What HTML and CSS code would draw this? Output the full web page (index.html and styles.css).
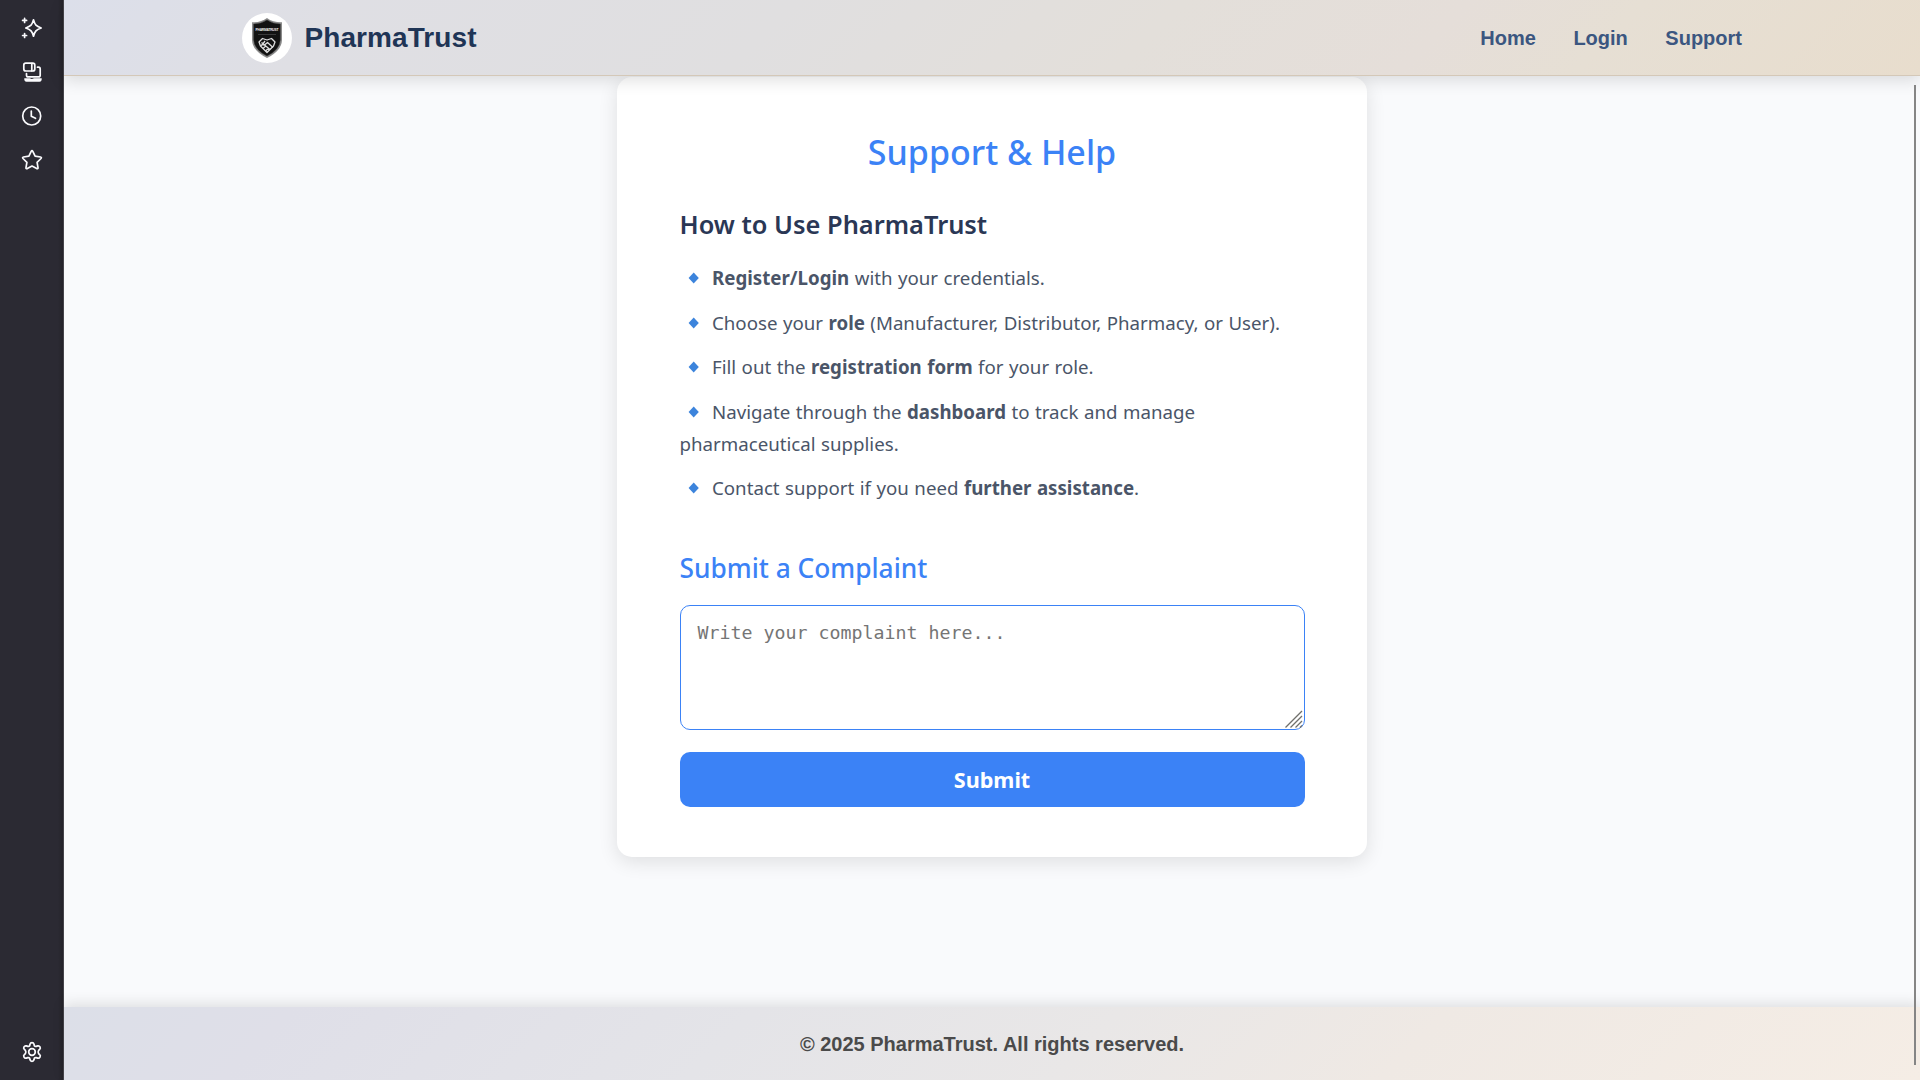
FILE: index.html
```
<!DOCTYPE html>
<html lang="en">
<head>
<meta charset="utf-8">
<title>PharmaTrust</title>
<link rel="stylesheet" href="styles.css">
</head>
<body>
<aside class="sidebar">
  <svg class="icon" viewBox="0 0 24 24"><path d="M13.500 3.800c1.300 5.100 2.700 6.500 7.700 8.200-5 1.700-6.400 3.100-7.700 8.200-1.300-5.100-2.700-6.500-7.700-8.200 5-1.700 6.400-3.100 7.700-8.200z"/><path d="M4.600 2.400v4M2.600 4.400h4M4.600 17.500v4M2.600 19.500h4"/></svg>
  <svg class="icon" viewBox="0 0 24 24"><rect x="3.800" y="3.200" width="11" height="7.800" rx="2"/><path d="M11.800 3.500v7.300M17.500 7.200h1q1.700 0 1.700 1.700v6.300q0 1.700-1.700 1.700H8.200q-1.700 0-1.700-1.700v-1.700"/><path class="solid" d="M4.300 18.300h5.700q1.500 1.500 4 0h7.700q.3 3.400-2.200 3.400H6.500q-2.500 0-2.200-3.400z"/></svg>
  <svg class="icon" viewBox="0 0 24 24"><circle cx="11.700" cy="12" r="9"/><path d="M11.300 7v5.300l4.200 2"/></svg>
  <svg class="icon" viewBox="0 0 24 24"><path d="M11.200 3.400q.8-1.500 1.600 0l2.300 4.800 5.400.8q1.500.3.500 1.500l-3.900 3.800.9 5.400q.1 1.500-1.300.9L12 18.100l-4.700 2.500q-1.400.6-1.300-.9l.9-5.400L3 10.500q-1-1.200.500-1.500l5.400-.8z"/></svg>
  <svg class="icon settings" viewBox="0 0 24 24"><circle cx="12" cy="12" r="3.300"/><path d="M10 4.200Q10.400 2.700 12 2.700T14 4.200L14.300 5.700Q15 6.700 16.200 6.400L17.700 5.900Q19.200 5.500 20 6.900T19.700 9.300L18.600 10.400Q17.700 12 18.600 13.600L19.700 14.700Q20.800 15.700 20 17.100T17.700 18.100L16.200 17.600Q15 17.300 14.300 18.300L14 19.800Q13.600 21.300 12 21.300T10 19.800L9.700 18.300Q9 17.300 7.800 17.600L6.300 18.100Q4.800 18.500 4 17.100T4.300 14.700L5.400 13.600Q6.300 12 5.400 10.400L4.300 9.300Q3.200 8.300 4 6.900T6.300 5.900L7.800 6.400Q9 6.700 9.700 5.700Z"/></svg>
</aside>
<div class="page">
  <header class="header">
    <div class="header-inner">
      <a class="brand">
        <svg class="logo" viewBox="0 0 50 50">
          <circle cx="25" cy="25" r="25" fill="#fff"/>
          <path d="M25 5Q31 9.500 40 9.300V27Q39.500 38 25 45Q10.500 38 10 27V9.300Q19 9.500 25 5z" fill="#8b8b8b"/>
          <path d="M25 7Q31 11 38.300 11V27Q37.500 37 25 43Q12.500 37 11.700 27V11Q19 11 25 7z" fill="#121212" stroke="#333" stroke-width=".5"/>
          <text class="logo-text" x="25" y="18.400" text-anchor="middle" textLength="23">PHARMATRUST</text>
          <path d="M16 21.500h18" stroke="#555" stroke-width=".6"/>
          <g fill="none" stroke="#ddd" stroke-width="1.300" stroke-linejoin="round"><path d="M17 29l3.500-3.500L25 27l4.500-1.500L33 29l-1.500 4-6.500 6.500-6.500-6.500z"/><path d="M19.500 29.500l8.500 7M23 28l-2.500 3.500 2 .5 3-2.500 5.500 5M18.500 33l3-2.500M21 35.500l3-2.700M23.500 38l3-2.800"/></g>
        </svg>
        <span class="brand-name">PharmaTrust</span>
      </a>
      <nav class="nav"><a>Home</a><a>Login</a><a>Support</a></nav>
    </div>
  </header>
  <main class="main">
    <section class="card">
      <h1 class="title">Support &amp; Help</h1>
      <h2 class="subtitle">How to Use PharmaTrust</h2>
      <ul class="steps">
        <li><svg class="bullet" viewBox="0 0 32.500 12"><path d="M13.700 .4l5.100 5.600-5.100 5.600L8.600 6z"/></svg><strong>Register/Login</strong> with your credentials.</li>
        <li><svg class="bullet" viewBox="0 0 32.500 12"><path d="M13.700 .4l5.100 5.600-5.100 5.600L8.600 6z"/></svg>Choose your <strong>role</strong> (Manufacturer, Distributor, Pharmacy, or User).</li>
        <li><svg class="bullet" viewBox="0 0 32.500 12"><path d="M13.700 .4l5.100 5.600-5.100 5.600L8.600 6z"/></svg>Fill out the <strong>registration form</strong> for your role.</li>
        <li><svg class="bullet" viewBox="0 0 32.500 12"><path d="M13.700 .4l5.100 5.600-5.100 5.600L8.600 6z"/></svg>Navigate through the <strong>dashboard</strong> to track and manage<br>pharmaceutical supplies.</li>
        <li><svg class="bullet" viewBox="0 0 32.500 12"><path d="M13.700 .4l5.100 5.600-5.100 5.600L8.600 6z"/></svg>Contact support if you need <strong>further assistance</strong>.</li>
      </ul>
      <h2 class="subtitle complaint">Submit a Complaint</h2>
      <div class="field">
        <textarea class="textarea" placeholder="Write your complaint here..."></textarea>
        <svg class="grip" viewBox="0 0 18 18"><path d="M.5 17.500l16.500-16.500M5.500 17.500L17 6M10.500 17.500L17 11M15 17.500l2-2"/></svg>
      </div>
      <button class="submit">Submit</button>
    </section>
  </main>
  <footer class="footer">© 2025 PharmaTrust. All rights reserved.</footer>
  <div class="scrollbar"></div>
</div>
</body>
</html>
```
FILE: styles.css
```
* { box-sizing: border-box; }
body {
  margin: 0;
  height: 100vh;
  display: flex;
  overflow: hidden;
  background: #f9fafc;
  font-family: "Noto Sans", "Open Sans", sans-serif;
}
.sidebar {
  width: 64px;
  display: flex;
  flex-direction: column;
  align-items: center;
  gap: 20px;
  padding: 16px 0;
  background: linear-gradient(90deg, #2b2a33 58px, #242329 63px, #45444a 63px);
}
.icon {
  width: 24px;
  height: 24px;
  flex: none;
  fill: none;
  stroke: #fbfbfe;
  stroke-width: 1.7;
  stroke-linecap: round;
  stroke-linejoin: round;
}
.icon .solid { fill: #fbfbfe; stroke: none; }
.settings { margin-top: auto; }
.page {
  flex: 1;
  display: flex;
  flex-direction: column;
  position: relative;
}
.header {
  height: 76px;
  flex: none;
  position: relative;
  z-index: 1;
  border-bottom: 1px solid #d4c8b8;
  background: linear-gradient(135deg, #dcdfea 0%, #dfdfe4 15%, #e0dfe0 38%, #e3dfda 58%, #e5ded9 73%, #e6dfd4 82%, #e8ddcd 100%);
  box-shadow: 0 5px 15px rgba(0, 0, 0, .12);
}
.header-inner {
  width: 1500px;
  height: 75px;
  margin: 0 auto;
  display: flex;
  align-items: center;
  justify-content: space-between;
  font-family: "Liberation Sans", Arial, sans-serif;
  font-weight: 700;
}
.brand { display: flex; align-items: center; gap: 12.5px; }
.logo { width: 50px; height: 50px; }
.logo-text { font: 700 3.3px "Liberation Sans", sans-serif; fill: #eee; }
.brand-name { font-size: 28px; letter-spacing: .08px; color: #1f3556; }
.nav { display: flex; gap: 37.5px; padding-top: 1px; font-size: 20px; color: #3b5680; }
.main { flex: 1; padding-top: 1px; }
.card {
  width: 750px;
  height: 780px;
  margin: 0 auto;
  padding: 53px 62.5px 50px;
  border-radius: 15px;
  background: #fff;
  box-shadow: 0 5px 19px rgba(0, 0, 0, .11);
}
.title {
  margin: 0 0 32px;
  font-size: 34px;
  line-height: 44px;
  font-weight: 500;
  text-align: center;
  color: #3b82f6;
}
.subtitle {
  margin: 0 0 20px;
  font-size: 25.4px;
  line-height: 36px;
  font-weight: 600;
  color: #2a3755;
}
.steps {
  margin: 0 0 46px;
  padding: 0;
  list-style: none;
  display: flex;
  flex-direction: column;
  gap: 12.5px;
  font-size: 18.7px;
  line-height: 32px;
  word-spacing: .6px;
  color: #4a5568;
  white-space: nowrap;
}
.bullet { width: 32.5px; height: 12px; fill: #3c84dc; vertical-align: 1px; }
.complaint { font-size: 26.3px; font-weight: 500; color: #3b82f6; margin-bottom: 19px; }
.field { position: relative; height: 125px; margin-bottom: 22px; }
.textarea {
  display: block;
  width: 100%;
  height: 125px;
  padding: 16px 17px;
  border: 1px solid #3b82f6;
  border-radius: 10px;
  resize: none;
  outline: 0;
  background: #fff;
  font: 18.27px "DejaVu Sans Mono", monospace;
}
.textarea::placeholder { color: #757575; }
.grip {
  position: absolute;
  right: 2px;
  bottom: 2px;
  width: 18px;
  height: 18px;
  fill: none;
  stroke: #70706c;
  stroke-width: 1.3;
}
.submit {
  display: block;
  width: 100%;
  height: 55px;
  padding: 0;
  border: 0;
  border-radius: 10px;
  background: #3b82f6;
  color: #fff;
  font: 700 21.6px "Noto Sans", sans-serif;
}
.footer {
  height: 73px;
  flex: none;
  display: flex;
  align-items: center;
  justify-content: center;
  padding-top: 2px;
  background: linear-gradient(135deg, #dcdfe8 0%, #dfdfe8 12%, #e4e4e8 36%, #e9e7e7 55%, #efe9e4 72%, #f5ede5 100%);
  box-shadow: 0 -4px 12px rgba(0, 0, 0, .1);
  font: 700 20px "Liberation Sans", Arial, sans-serif;
  color: #4a4a4a;
}
.scrollbar {
  position: absolute;
  z-index: 2;
  right: 4px;
  top: 85px;
  width: 2px;
  height: 980px;
  background: #858585;
}
```
